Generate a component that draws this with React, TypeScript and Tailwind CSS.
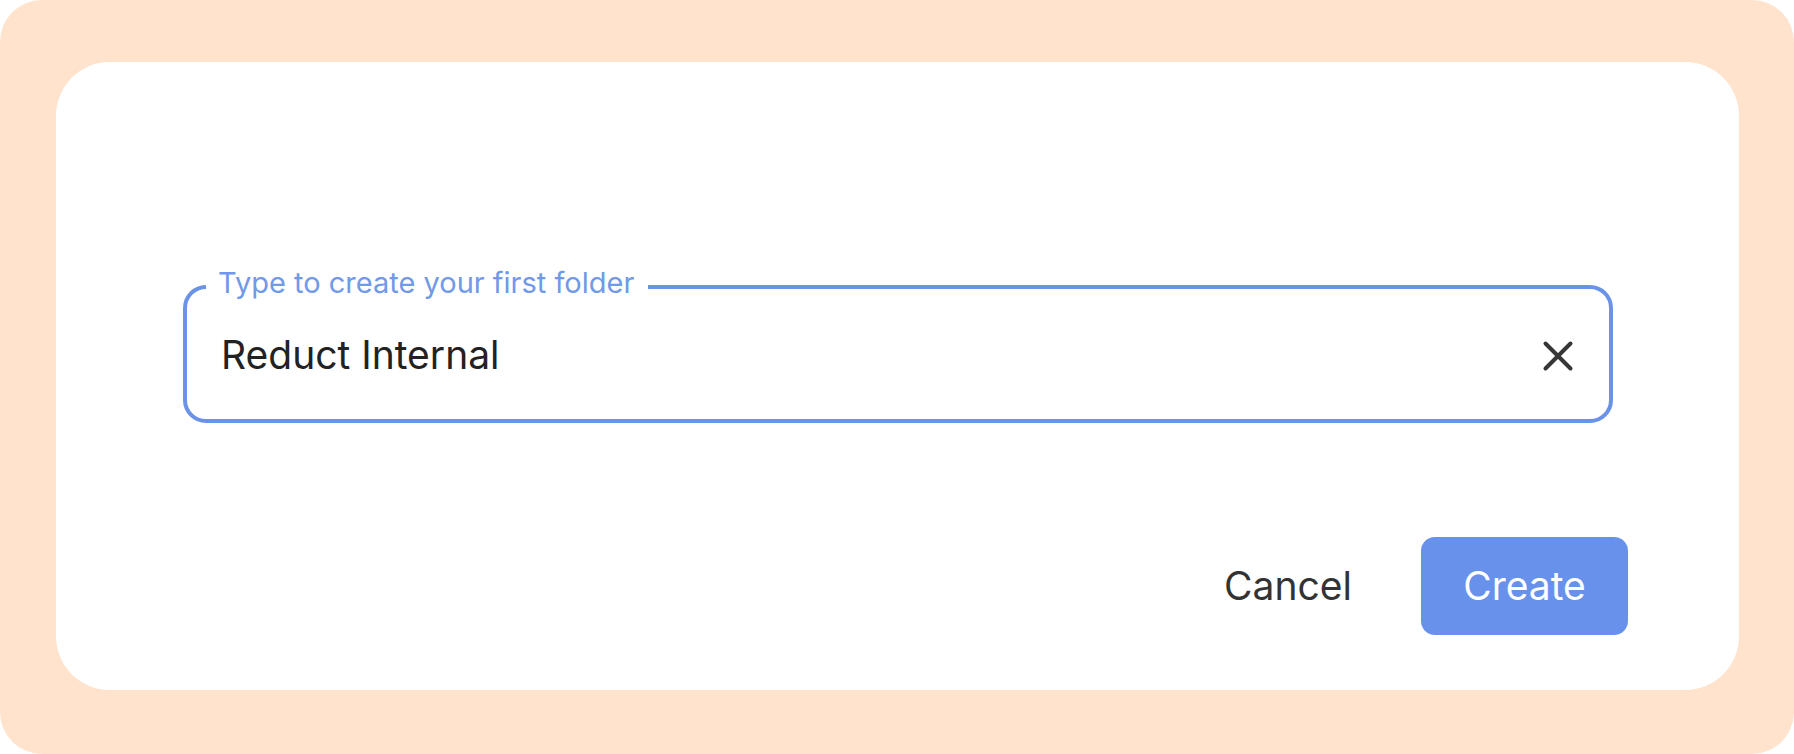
import { useState } from "react"

function CloseIcon() {
  return (
    <svg width="32" height="32" viewBox="0 0 32 32" fill="none" aria-hidden="true">
      <path d="M3.5 3.5 L28.5 28.5 M28.5 3.5 L3.5 28.5" stroke="#363636" strokeWidth="4" strokeLinecap="round" />
    </svg>
  )
}

export default function App() {
  const [name, setName] = useState("Reduct Internal")

  return (
    <div className="w-full h-[754px] bg-white" style={{ fontFamily: "Inter, 'Noto Sans', sans-serif" }}>
      <div className="h-full rounded-[42px] bg-[#ffe3cd] pl-[56px] pr-[55px] pt-[62px] pb-[64px]">
        {/* Dialog card */}
        <div className="h-full rounded-[54px] bg-white flex flex-col pl-[127px] pr-[111px] pt-[223px] pb-[55px]">
          {/* Outlined input */}
          <div className="relative mr-[15px] h-[138px] rounded-[23px] border-[4px] border-[#6a93e8] flex items-center justify-between pl-[34px] pr-[35px]">
            <span className="absolute left-[19px] top-[-21px] bg-white pl-[12px] pr-[14px] text-[29px] leading-none text-[#7099e8]">
              Type to create your first folder
            </span>
            <span className="text-[39px] text-[#222222] pt-[3px]">{name}</span>
            <button type="button" onClick={() => setName("")} className="flex items-center justify-center pt-[3px]">
              <CloseIcon />
            </button>
          </div>

          {/* Actions */}
          <div className="mt-[114px] flex items-center justify-end gap-[69px]">
            <button type="button" className="text-[39px] text-[#333333]">
              Cancel
            </button>
            <button
              type="button"
              className="w-[207px] h-[98px] rounded-[14px] bg-[#6891ec] text-[39px] text-white flex items-center justify-center"
            >
              Create
            </button>
          </div>
        </div>
      </div>
    </div>
  )
}
